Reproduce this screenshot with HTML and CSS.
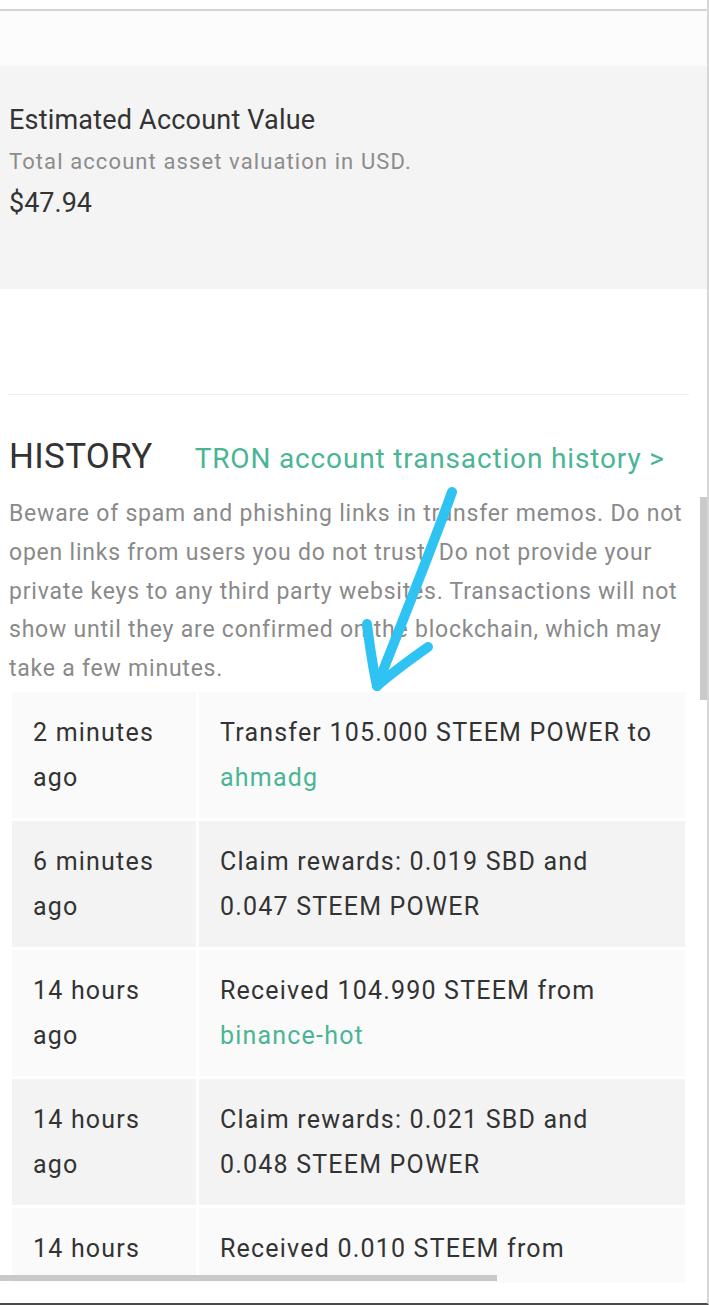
FILE: index.html
```html
<!DOCTYPE html>
<html lang="en">
<head>
    <meta charset="UTF-8">
    <meta name="viewport" content="width=device-width, initial-scale=1.0">
    <title>Wallet</title>
    <link rel="stylesheet" href="styles.css">
</head>
<body>
    <div class="screen">
        <div class="topbar"></div>
        <div class="viewport">
            <div class="spacer"></div>
            <div class="value-box">
                <div class="value-title">Estimated Account Value</div>
                <div class="value-desc">Total account asset valuation in USD.</div>
                <div class="value-amount">$47.94</div>
            </div>
            <div class="divider"></div>
            <div class="history-head">
                <h2>HISTORY</h2>
                <a class="tron-link">TRON account transaction history &gt;</a>
            </div>
            <p class="warning">Beware of spam and phishing links in transfer memos. Do not open links from users you do not trust. Do not provide your private keys to any third party websites. Transactions will not show until they are confirmed on the blockchain, which may take a few minutes.</p>
            <table class="history">
                <tr>
                    <td class="when">2 minutes ago</td>
                    <td>Transfer 105.000 STEEM POWER to <a>ahmadg</a></td>
                </tr>
                <tr>
                    <td class="when">6 minutes ago</td>
                    <td>Claim rewards: 0.019 SBD and 0.047 STEEM POWER</td>
                </tr>
                <tr>
                    <td class="when">14 hours ago</td>
                    <td>Received 104.990 STEEM from <a>binance-hot</a></td>
                </tr>
                <tr>
                    <td class="when">14 hours ago</td>
                    <td>Claim rewards: 0.021 SBD and 0.048 STEEM POWER</td>
                </tr>
                <tr>
                    <td class="when">14 hours ago</td>
                    <td>Received 0.010 STEEM from <a>binance-hot</a></td>
                </tr>
            </table>
            <div class="hscroll"></div>
        </div>
        <div class="vscroll"></div>
        <svg class="arrow" width="709" height="1305" viewBox="0 0 709 1305">
            <g fill="none" stroke="#2fc3f3" stroke-width="10" stroke-linecap="round" stroke-linejoin="round">
                <path d="M452 492 C432 548 402 622 377 686"/>
                <path d="M367 624 C370 648 373 668 377 686 C393 672 411 659 428 647"/>
            </g>
        </svg>
    </div>
</body>
</html>
```

FILE: styles.css
```css
html, body {
    margin: 0;
    padding: 0;
    background: #fff;
}
.screen {
    position: relative;
    width: 707px;
    height: 1303px;
    border-right: 2px solid #d6d6d6;
    border-bottom: 2px solid #4a4a4a;
    font-family: Roboto, "Liberation Sans", sans-serif;
    color: #333;
    overflow: hidden;
}
.topbar {
    height: 9px;
    background: #fff;
    border-bottom: 2px solid #d4d4d4;
}
.viewport {
    position: relative;
    height: 1272px;
    overflow: hidden;
}
.spacer {
    height: 55px;
    background: #fcfcfc;
}
.value-box {
    height: 223px;
    background: #f4f4f4;
    padding: 34px 9px 0;
    box-sizing: border-box;
}
.value-title {
    font-size: 27px;
    line-height: 41px;
    letter-spacing: 0.2px;
}
.value-desc {
    font-size: 22px;
    line-height: 41px;
    letter-spacing: 1.1px;
    color: #8c8c8c;
}
.value-amount {
    font-size: 27px;
    line-height: 43px;
}
.divider {
    height: 1px;
    margin: 105px 18px 0 8px;
    background: #ececec;
}
.history-head {
    display: flex;
    align-items: baseline;
    gap: 42px;
    padding: 40px 9px 0;
}
.history-head h2 {
    margin: 0;
    font-weight: 400;
    font-size: 35px;
    line-height: 44px;
    letter-spacing: 0.3px;
    color: #333;
}
.tron-link {
    font-size: 28px;
    letter-spacing: 0.85px;
    color: #4ab595;
}
.warning {
    margin: 16px 9px 0;
    font-size: 23px;
    line-height: 38.8px;
    letter-spacing: 0.78px;
    color: #8a8a8a;
}
.history {
    margin: 0 0 0 9px;
    width: 679px;
    border-spacing: 3px;
    font-size: 25px;
    line-height: 45px;
    letter-spacing: 1.2px;
    color: #333;
}
.history td {
    padding: 18px 24px 18px 21px;
    vertical-align: top;
    background: #fafafa;
}
.history tr:nth-child(even) td {
    background: #f3f3f3;
}
.history td.when {
    width: 139px;
}
.history a {
    color: #4ab595;
    white-space: nowrap;
}
.hscroll {
    position: absolute;
    left: 0;
    bottom: 2px;
    width: 497px;
    height: 6px;
    background: #c9c9c9;
}
.vscroll {
    position: absolute;
    right: 0;
    top: 497px;
    width: 7px;
    height: 203px;
    background: #cacaca;
}
.arrow {
    position: absolute;
    left: 0;
    top: 0;
    pointer-events: none;
}
```
